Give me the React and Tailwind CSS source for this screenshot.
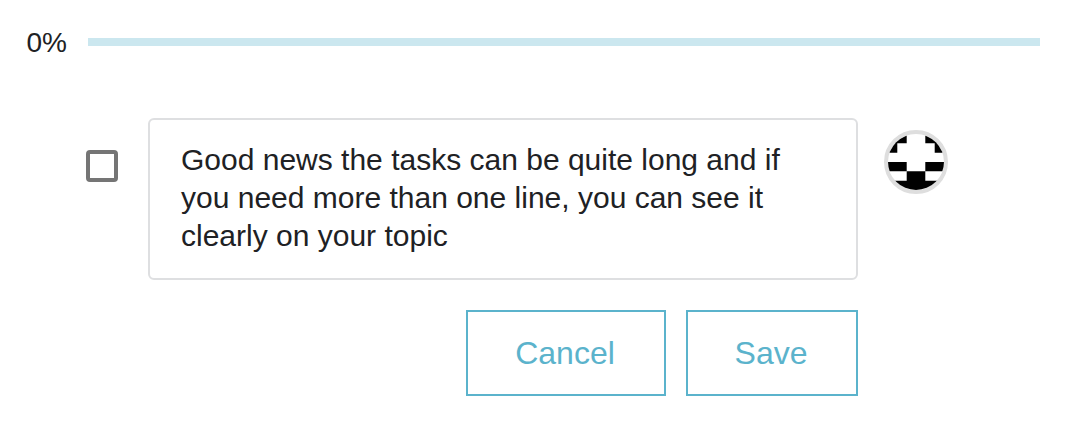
const task =
  'Good news the tasks can be quite long and if you need more than one line, you can see it clearly on your topic'

function Progress({ value }) {
  return (
    <div className="flex h-[84px] items-center pl-[26.5px]">
      <span className="w-[61.5px] pt-0.5 text-[28px] leading-none">{value}%</span>
      <div className="h-2 w-[952px] bg-[#cbe7ef]">
        <div className="h-full bg-[#5bb3cc]" style={{ width: `${value}%` }} />
      </div>
    </div>
  )
}

function Avatar() {
  return (
    <svg viewBox="0 0 64 64" className="ml-[26px] mt-3 size-16 shrink-0">
      <defs>
        <clipPath id="avatar">
          <circle cx="32" cy="32" r="28" />
        </clipPath>
      </defs>
      <circle cx="32" cy="32" r="30" fill="#fff" stroke="#dedede" strokeWidth="4" />
      <g clipPath="url(#avatar)">
        <path d="M4 4h18.7v9.3H4zM41.3 4H60v9.3H41.3zM4 13.3h9.3v9.4H4zM50.7 13.3H60v9.4h-9.3zM4 32h18.7v9.3H4zM41.3 32H60v9.3H41.3zM22.7 41.3h18.6v9.4H22.7zM4 50.7h56V60H4z" />
      </g>
    </svg>
  )
}

function Button({ children, className }) {
  return (
    <button className={`h-[86px] border-2 border-[#5bb3cc] pr-0.5 text-[32px] text-[#5bb3cc] ${className}`}>
      {children}
    </button>
  )
}

export default function App() {
  return (
    <div className="h-[436px] w-[1084px] overflow-hidden bg-white font-['Liberation_Sans',Arial,sans-serif] text-[#202124]">
      <Progress value={0} />
      <div className="flex items-start pl-[86px] pt-[34px]">
        <span role="checkbox" aria-checked="false" className="mt-8 size-8 shrink-0 rounded border-4 border-[#757575]" />
        <div className="ml-[30px] h-[162px] w-[710px] rounded-md border-2 border-[#dedfe1] pl-[31px] pr-[60px] pt-[21px] text-[30px] leading-[38px]">
          {task}
        </div>
        <Avatar />
      </div>
      <div className="flex w-[858px] justify-end gap-5 pt-[30px]">
        <Button className="w-[200px]">Cancel</Button>
        <Button className="w-[172px]">Save</Button>
      </div>
    </div>
  )
}
